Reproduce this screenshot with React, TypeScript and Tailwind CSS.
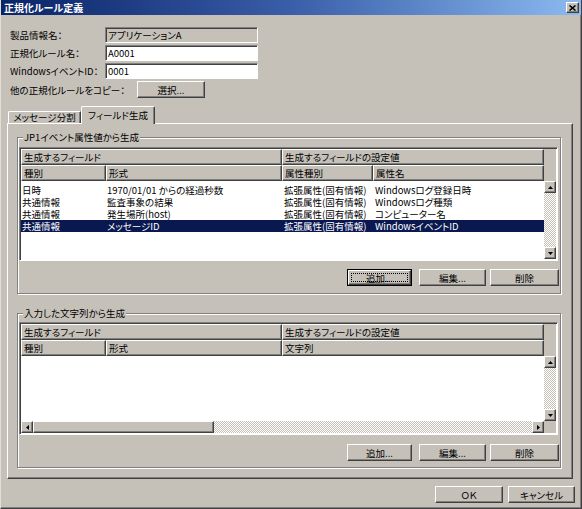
import React from "react";

const raised =
  "border border-t-white border-l-white border-r-[#404040] border-b-[#404040] shadow-[inset_-1px_-1px_0_#808080]";
const sunken =
  "border border-t-[#808080] border-l-[#808080] border-r-white border-b-white shadow-[inset_1px_1px_0_#404040]";
const dither =
  "bg-[image:repeating-conic-gradient(#ffffff_0_25%,#c5c1b9_0_50%)] bg-[length:2px_2px]";

function Arrow({ d }: { d: "u" | "d" | "l" | "r" }) {
  if (d === "u")
    return (
      <svg width="5" height="3" viewBox="0 0 5 3">
        <polygon points="2.5,0 5,3 0,3" fill="#000" />
      </svg>
    );
  if (d === "d")
    return (
      <svg width="5" height="3" viewBox="0 0 5 3">
        <polygon points="0,0 5,0 2.5,3" fill="#000" />
      </svg>
    );
  if (d === "l")
    return (
      <svg width="3" height="5" viewBox="0 0 3 5">
        <polygon points="3,0 3,5 0,2.5" fill="#000" />
      </svg>
    );
  return (
    <svg width="3" height="5" viewBox="0 0 3 5">
      <polygon points="0,0 3,2.5 0,5" fill="#000" />
    </svg>
  );
}

function SbBtn({ d }: { d: "u" | "d" | "l" | "r" }) {
  return (
    <div className={"w-[12px] h-[12px] shrink-0 bg-[#c5c1b9] flex items-center justify-center " + raised}>
      <Arrow d={d} />
    </div>
  );
}

function HCell({ cls, children }: { cls: string; children?: React.ReactNode }) {
  return (
    <div
      className={
        "h-[16px] shrink-0 bg-[#c5c1b9] flex items-center pl-[2px] overflow-hidden whitespace-nowrap leading-[12px] " +
        raised +
        " " +
        cls
      }
    >
      {children}
    </div>
  );
}

function Btn({ cls, children }: { cls: string; children: React.ReactNode }) {
  return (
    <div className={"h-[17px] shrink-0 bg-[#c5c1b9] flex items-center justify-center leading-[12px] " + raised + " " + cls}>
      {children}
    </div>
  );
}

function DefBtn({ cls, children }: { cls: string; children: React.ReactNode }) {
  return (
    <div className={"h-[17px] shrink-0 border border-black flex " + cls}>
      <div className={"flex-1 flex p-[2px] bg-[#c5c1b9] " + raised}>
        <div className="flex-1 border border-dotted border-black flex items-center justify-center leading-[10px]">
          {children}
        </div>
      </div>
    </div>
  );
}

function Row({ c, sel }: { c: string[]; sel?: boolean }) {
  return (
    <div
      className={
        "flex h-[12px] items-center whitespace-nowrap leading-[12px] " +
        (sel ? "bg-[#0a1850] text-white" : "")
      }
    >
      <div className="w-[85px] shrink-0 pl-[1px]">{c[0]}</div>
      <div className="w-[176px] shrink-0 pl-[1px]">{c[1]}</div>
      <div className="w-[91px] shrink-0 pl-[2px]">{c[2]}</div>
      <div className="flex-1 pl-[2px]">{c[3]}</div>
    </div>
  );
}

function Header({ last }: { last: "attr" | "str" }) {
  return (
    <div className="flex shrink-0">
      <div className="w-[523px] flex flex-col">
        <div className="flex">
          <HCell cls="w-[261px]">生成するフィールド</HCell>
          <HCell cls="w-[262px]">生成するフィールドの設定値</HCell>
        </div>
        <div className="flex">
          <HCell cls="w-[85px]">種別</HCell>
          <HCell cls="w-[176px]">形式</HCell>
          {last === "attr" ? (
            <>
              <HCell cls="w-[91px]">属性種別</HCell>
              <HCell cls="w-[171px]">属性名</HCell>
            </>
          ) : (
            <HCell cls="w-[262px]">文字列</HCell>
          )}
        </div>
      </div>
      <div className="w-[12px] bg-[#c5c1b9]" />
    </div>
  );
}

function VScroll() {
  return (
    <div className="w-[12px] flex flex-col">
      <SbBtn d="u" />
      <div className={"flex-1 " + dither} />
      <SbBtn d="d" />
    </div>
  );
}

function ButtonsRow({ def }: { def?: boolean }) {
  return (
    <div className="flex justify-end pr-[1px]">
      {def ? <DefBtn cls="w-[65px]">追加...</DefBtn> : <Btn cls="w-[65px]">追加...</Btn>}
      <Btn cls="w-[67px] ml-[7px]">編集...</Btn>
      <Btn cls="w-[69px] ml-[4px]">削除</Btn>
    </div>
  );
}

export default function App() {
  return (
    <div className="w-[582px] h-[509px] overflow-hidden bg-[#c5c1b9] text-black text-[9.5px] [font-family:'Noto_Sans_CJK_JP',sans-serif] [font-feature-settings:'palt']">
      <div className="w-[582px] h-[509px] flex flex-col border-l border-l-[#e2ded6] border-r border-r-[#404040] border-b border-b-[#404040] shadow-[inset_-1px_-1px_0_#808080]">
        {/* title bar */}
        <div className="h-[15px] shrink-0 flex items-center justify-between bg-linear-to-r from-[#0a2468] via-[#3a5ea8] to-[#8cbaf0] pl-[3px] pr-[2px]">
          <span className="text-white font-bold text-[10px] leading-[12px]">正規化ルール定義</span>
          <div className={"w-[13px] h-[11px] bg-[#c5c1b9] flex items-center justify-center " + raised}>
            <svg width="7" height="6" viewBox="0 0 7 6">
              <path d="M0.5 0.5 L6.5 5.5 M6.5 0.5 L0.5 5.5" stroke="#000" strokeWidth="1.6" />
            </svg>
          </div>
        </div>

        {/* fields */}
        <div className="mt-[12px] pl-[9px] flex flex-col gap-[2px]">
          <div className="flex items-center h-[16px]">
            <div className="w-[95px] leading-[12px]">製品情報名：</div>
            <div className={"w-[153px] h-[16px] bg-[#c5c1b9] flex items-center pl-[2px] leading-[12px] " + sunken}>
              アプリケーションA
            </div>
          </div>
          <div className="flex items-center h-[16px]">
            <div className="w-[95px] leading-[12px]">正規化ルール名：</div>
            <div className={"w-[153px] h-[16px] bg-white flex items-center pl-[2px] leading-[12px] " + sunken}>
              A0001
            </div>
          </div>
          <div className="flex items-center h-[16px]">
            <div className="w-[95px] leading-[12px]">WindowsイベントID：</div>
            <div className={"w-[153px] h-[16px] bg-white flex items-center pl-[2px] leading-[12px] " + sunken}>
              0001
            </div>
          </div>
          <div className="flex items-center h-[17px]">
            <div className="w-[127px] leading-[12px]">他の正規化ルールをコピー：</div>
            <Btn cls="w-[68px]">選択...</Btn>
          </div>
        </div>

        {/* tabs */}
        <div className="mt-[8px] ml-[6px] h-[17px] shrink-0 flex items-end pl-[1px]">
          <div className="w-[73px] h-[12px] border-t border-l border-r border-t-white border-l-white border-r-[#404040] shadow-[inset_-1px_0_0_#808080] rounded-tl-[2px] flex items-center justify-center leading-[11px]">
            メッセージ分割
          </div>
          <div className="relative z-10 -mb-px w-[74px] h-[18px] bg-[#c5c1b9] border-t border-l border-r border-t-white border-l-white border-r-[#404040] shadow-[inset_-1px_0_0_#808080] rounded-t-[2px] flex items-center justify-center pb-[2px] leading-[12px]">
            フィールド生成
          </div>
        </div>

        {/* panel */}
        <div className="ml-[6px] w-[566px] h-[356px] shrink-0 flex flex-col border border-t-white border-l-white border-r-[#404040] border-b-[#404040] shadow-[inset_-1px_-1px_0_#808080]">
          {/* group 1 */}
          <div className="relative mt-[13px] ml-[9px] w-[544px] h-[157px] shrink-0 border border-[#808080] shadow-[inset_1px_1px_0_#ffffff,1px_1px_0_#ffffff] pt-[9px] pl-[1px] flex flex-col">
            <div className="absolute left-[5px] -top-[7px] px-[1px] bg-[#c5c1b9] leading-[12px]">
              JP1イベント属性値から生成
            </div>
            <div className={"w-[539px] h-[114px] shrink-0 bg-white flex flex-col p-[1px] " + sunken}>
              <Header last="attr" />
              <div className="flex flex-1">
                <div className="w-[523px] bg-white pt-[3px]">
                  <Row c={["日時", "1970/01/01 からの経過秒数", "拡張属性(固有情報)", "Windowsログ登録日時"]} />
                  <Row c={["共通情報", "監査事象の結果", "拡張属性(固有情報)", "Windowsログ種類"]} />
                  <Row c={["共通情報", "発生場所(host)", "拡張属性(固有情報)", "コンピューター名"]} />
                  <Row sel c={["共通情報", "メッセージID", "拡張属性(固有情報)", "WindowsイベントID"]} />
                </div>
                <VScroll />
              </div>
            </div>
            <div className="mt-[8px]">
              <ButtonsRow def />
            </div>
          </div>

          {/* group 2 */}
          <div className="relative mt-[19px] ml-[9px] w-[544px] h-[155px] shrink-0 border border-[#808080] shadow-[inset_1px_1px_0_#ffffff,1px_1px_0_#ffffff] pt-[8px] pl-[1px] flex flex-col">
            <div className="absolute left-[5px] -top-[7px] px-[1px] bg-[#c5c1b9] leading-[12px]">
              入力した文字列から生成
            </div>
            <div className={"w-[539px] h-[113px] shrink-0 bg-white flex flex-col p-[1px] " + sunken}>
              <Header last="str" />
              <div className="flex flex-1">
                <div className="w-[523px] bg-white" />
                <VScroll />
              </div>
              <div className="flex h-[12px] shrink-0">
                <div className="w-[523px] flex">
                  <SbBtn d="l" />
                  <div className={"w-[181px] h-[12px] bg-[#c5c1b9] " + raised} />
                  <div className={"flex-1 " + dither} />
                  <SbBtn d="r" />
                </div>
                <div className="w-[12px] bg-[#c5c1b9]" />
              </div>
            </div>
            <div className="mt-[9px]">
              <ButtonsRow />
            </div>
          </div>
        </div>

        {/* OK / Cancel */}
        <div className="mt-[7px] flex justify-end pr-[6px]">
          <Btn cls="w-[68px]">ＯＫ</Btn>
          <Btn cls="w-[67px] ml-[5px]">キャンセル</Btn>
        </div>
      </div>
    </div>
  );
}
